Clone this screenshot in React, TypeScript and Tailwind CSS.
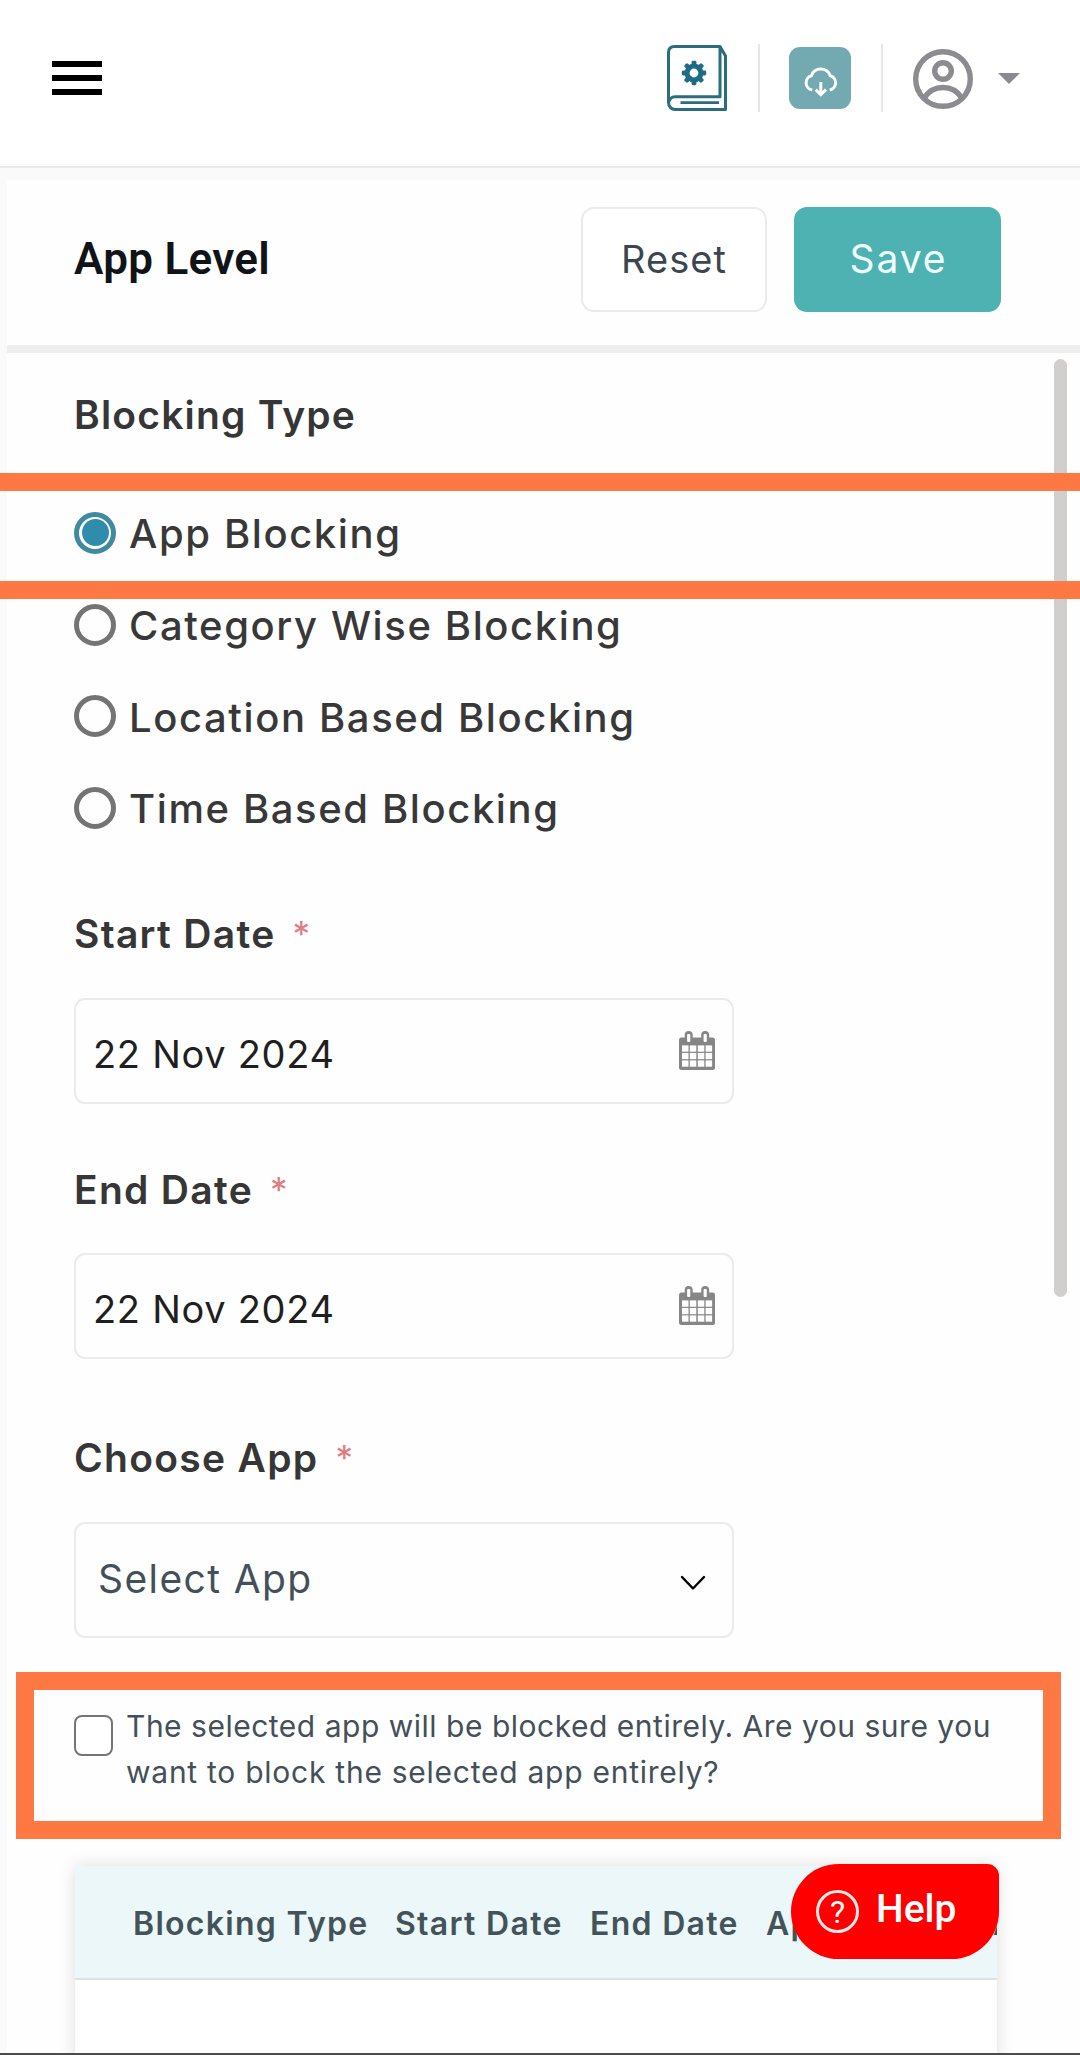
import React from 'react';

interface LabelProps {
    text: string;
    className?: string;
}

interface DateFieldProps {
    value: string;
    className?: string;
}

const gearTeeth = [0, 45, 90, 135, 180, 225, 270, 315];
const calendarCols = [3, 10.8, 18.8, 26.6];
const calendarRows = [14.4, 21.9, 29.4];

const BookIcon: React.FC = () => (
    <svg width="60" height="66" viewBox="0 0 60 66" fill="none">
        <path
            d="M1.5 58V7.5Q1.5 1.5 7.5 1.5H53L58.5 11V64.5H8A6.4 6.4 0 0 1 8 51.7H53V1.5"
            stroke="#2a6d7c"
            strokeWidth="3"
            strokeLinejoin="round"
        />
        <path d="M13.5 57.6H52" stroke="#2a6d7c" strokeWidth="2.6" />
        <circle cx="27" cy="28" r="6.9" stroke="#1f6b85" strokeWidth="5" />
        {gearTeeth.map((angle) => (
            <rect key={angle} x="24.6" y="15.8" width="4.8" height="5" rx="1.4" fill="#1f6b85" transform={`rotate(${angle} 27 28)`} />
        ))}
    </svg>
);

const CloudIcon: React.FC = () => (
    <svg width="62" height="62" viewBox="0 0 62 62" fill="none" stroke="#fff" strokeWidth="3">
        <path d="M23.3 43A7.3 7.3 0 0 1 22.3 28.8A10 10 0 0 1 41.3 28.8A7.3 7.3 0 0 1 40.7 43" />
        <path d="M31.8 35V47M26.6 42.6L31.8 47.6L37 42.6" />
    </svg>
);

const UserIcon: React.FC = () => (
    <svg width="60" height="60" viewBox="0 0 60 60" fill="none" stroke="#8b8b90" strokeWidth="5.4">
        <circle cx="30" cy="30" r="27.3" />
        <circle cx="30" cy="22" r="8.3" />
        <path d="M11 49Q18 38.5 30 38.5T49 49" />
    </svg>
);

const CalendarIcon: React.FC = () => (
    <svg className="-mt-[2px]" width="36" height="39" viewBox="0 0 36 39">
        <rect x="0" y="6.5" width="36" height="32.5" rx="2.5" fill="#868686" />
        {[9.7, 26.2].map((x) => (
            <g key={x}>
                <rect x={x - 4} y="0" width="8" height="12" rx="4" fill="#868686" />
                <rect x={x - 1.6} y="3" width="3.2" height="8" rx="1" fill="#fff" />
            </g>
        ))}
        {calendarRows.map((y) =>
            calendarCols.map((x) => <rect key={`${x}-${y}`} x={x} y={y} width="6.5" height="6.3" fill="#fff" />)
        )}
    </svg>
);

const Header: React.FC = () => (
    <header className="flex h-[168px] shrink-0 items-start justify-between border-b-2 border-[#e8eaea] bg-white pl-[52px] pr-[60px]">
        <div className="mt-[61px] flex w-[50px] flex-col gap-2">
            <div className="h-[6px] bg-black" />
            <div className="h-[6px] bg-black" />
            <div className="h-[6px] bg-black" />
        </div>
        <div className="mt-[44px] flex h-[68px] items-center">
            <BookIcon />
            <div className="ml-[31px] h-[68px] w-[2px] bg-[#e6e6e6]" />
            <div className="ml-[29px] rounded-[11px] bg-[#73a9b0]">
                <CloudIcon />
            </div>
            <div className="ml-[30px] h-[68px] w-[2px] bg-[#e6e6e6]" />
            <div className="mt-[2px] ml-[30px]">
                <UserIcon />
            </div>
            <svg className="ml-[25px]" width="22" height="11" viewBox="0 0 22 11">
                <path d="M0 0H22L11 11Z" fill="#8b8b8f" />
            </svg>
        </div>
    </header>
);

const FieldLabel: React.FC<LabelProps> = ({ text, className }) => (
    <div className={`flex h-[46px] items-center ${className ?? ''}`}>
        <p className="text-[39px] leading-[46px] font-semibold tracking-[1.3px] text-[#363636]">{text}</p>
        <span className="ml-[17px] text-[35px] leading-[46px] text-[#e07c82]">*</span>
    </div>
);

const DateField: React.FC<DateFieldProps> = ({ value, className }) => (
    <div className={`flex h-[106px] w-[660px] items-center justify-between rounded-[11px] border-2 border-[#ebebeb] pl-[17px] pr-[17px] ${className ?? ''}`}>
        <p className="pt-[5px] text-[38px] leading-[46px] tracking-[0.7px] text-[#1f1f1f]">{value}</p>
        <CalendarIcon />
    </div>
);

const Radio: React.FC<{ label: string; checked?: boolean }> = ({ label, checked }) => (
    <div className="flex h-[51px] items-center">
        {checked ? (
            <div className="flex h-[42px] w-[42px] items-center justify-center rounded-full border-[5px] border-[#3f8a9f]">
                <div className="h-[27px] w-[27px] rounded-full bg-[#2f8cab]" />
            </div>
        ) : (
            <div className="h-[42px] w-[42px] rounded-full border-[5px] border-[#747474]" />
        )}
        <p className="ml-[13px] pt-[2px] text-[40px] leading-[51px] font-medium tracking-[1.6px] text-[#383838]">{label}</p>
    </div>
);

const HelpButton: React.FC = () => (
    <button className="absolute top-[-2px] left-[716px] flex h-[95px] w-[208px] items-center rounded-[48px] rounded-tr-[12px] bg-[#fe0000] pl-[25px] font-['Roboto',sans-serif] text-white">
        <span className="flex h-[43px] w-[43px] items-center justify-center rounded-full border-[3px] border-[#ffe9e6] text-[32px] leading-none">?</span>
        <span className="-mt-[6px] ml-[17px] text-[39px] leading-[46px] font-medium">Help</span>
    </button>
);

const App: React.FC = () => {
    const otherTypes = ['Category Wise Blocking', 'Location Based Blocking', 'Time Based Blocking'];

    return (
        <div className="flex h-[2055px] w-[1080px] flex-col overflow-hidden bg-[#fafafa] font-['Inter',sans-serif]">
            <Header />
            <main className="relative mt-3 ml-[7px] min-h-0 flex-1 bg-[#fefefe]">
                <div className="flex h-[173px] items-center justify-between border-b-8 border-[#eeeeee] pr-[79px] pl-[67px]">
                    <h1 className="-mt-[8px] font-['Roboto',sans-serif] text-[44px] leading-[52px] font-semibold tracking-[0.3px] text-[#101418]">App Level</h1>
                    <div className="-mt-[6px] flex gap-[27px]">
                        <button className="h-[105px] w-[186px] rounded-[13px] border-2 border-[#ebebeb] bg-white text-[38px] tracking-[1.1px] text-[#3b4650]">Reset</button>
                        <button className="h-[105px] w-[207px] rounded-[13px] bg-[#4db2b1] pl-[2px] text-[39px] tracking-[1.9px] text-[#f0ffff]">Save</button>
                    </div>
                </div>

                <div className="absolute top-[179px] right-[13px] h-[938px] w-[13px] rounded-full bg-[#d0cfce]" />

                <div className="pl-[67px]">
                    <p className="pt-[39px] text-[39px] leading-[46px] font-semibold tracking-[1.2px] text-[#363636]">Blocking Type</p>
                    <div className="relative mt-[35px] -ml-[74px] h-[126px] w-[1080px] border-y-[18px] border-[#fe7843] pt-[16px] pl-[74px]">
                        <Radio label="App Blocking" checked />
                    </div>
                    <div className="flex flex-col gap-[40.5px]">
                        {otherTypes.map((type) => (
                            <Radio key={type} label={type} />
                        ))}
                    </div>

                    <FieldLabel text="Start Date" className="mt-[78px]" />
                    <DateField value="22 Nov 2024" className="mt-[41px]" />
                    <FieldLabel text="End Date" className="mt-[63px]" />
                    <DateField value="22 Nov 2024" className="mt-[40px]" />

                    <FieldLabel text="Choose App" className="mt-[76px]" />
                    <div className="mt-[41px] flex h-[116px] w-[660px] items-center justify-between rounded-[11px] border-2 border-[#ebebeb] pr-[26px] pl-[22px]">
                        <p className="-mt-[3px] text-[39px] leading-[46px] tracking-[1.4px] text-[#445059]">Select App</p>
                        <svg className="mt-[5px]" width="26" height="16" viewBox="0 0 26 16" fill="none" stroke="#000" strokeWidth="2.4" strokeLinecap="round" strokeLinejoin="round">
                            <path d="M2 2L13 13.5L24 2" />
                        </svg>
                    </div>

                    <div className="relative mt-[34px] -ml-[58px] flex h-[167px] w-[1045px] border-[18px] border-[#fe7843] pl-[40px]">
                        <div className="mt-[25px] h-[41px] w-[39px] shrink-0 rounded-[8px] border-2 border-[#757575] bg-white" />
                        <p className="ml-[13px] pt-[13px] text-[30px] leading-[46px] whitespace-nowrap text-[#445059]">
                            <span className="block tracking-[0.51px]">The selected app will be blocked entirely. Are you sure you</span>
                            <span className="block tracking-[0.74px]">want to block the selected app entirely?</span>
                        </p>
                    </div>

                    <div className="relative mt-[27px] ml-px w-[922px]">
                        <div className="h-[300px] overflow-hidden bg-white shadow-[0_0_16px_rgba(0,0,0,0.13)]">
                            <div className="flex h-[114px] items-center border-b-2 border-[#dbe4e4] bg-[#ebf7f8] pt-[3px] pl-[58px] text-[32px] font-semibold tracking-[1.3px] whitespace-nowrap text-[#44535a]">
                                <p className="w-[262px] shrink-0">Blocking Type</p>
                                <p className="w-[195px] shrink-0">Start Date</p>
                                <p className="w-[176px] shrink-0">End Date</p>
                                <p className="w-[227px] shrink-0">App Name</p>
                                <p className="shrink-0">Action</p>
                            </div>
                        </div>
                        <HelpButton />
                    </div>
                </div>
            </main>
            <div className="relative h-[2px] shrink-0 bg-[#4c4c4c]" />
        </div>
    );
};

export default App;
